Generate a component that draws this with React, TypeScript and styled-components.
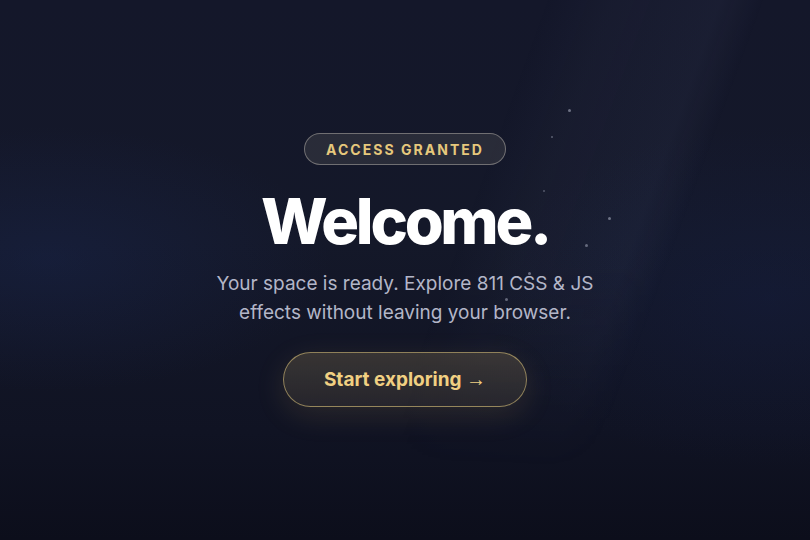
import styled, { createGlobalStyle } from 'styled-components';

const GlobalStyle = createGlobalStyle`
  html, body {
    margin: 0;
    padding: 0;
    background: #121527;
  }
  * {
    box-sizing: border-box;
  }
`;

const particles = [
  { x: 568, y: 109, s: 3, o: 0.5 },
  { x: 551, y: 136, s: 2, o: 0.4 },
  { x: 543, y: 190, s: 2, o: 0.35 },
  { x: 608, y: 217, s: 3, o: 0.5 },
  { x: 585, y: 244, s: 3, o: 0.45 },
  { x: 528, y: 272, s: 3, o: 0.5 },
  { x: 505, y: 298, s: 3, o: 0.45 },
];

function App() {
  return (
    <>
      <GlobalStyle />
      <Screen>
        <Beam />
        {particles.map((p, i) => (
          <Particle
            key={i}
            style={{ left: p.x, top: p.y, width: p.s, height: p.s, opacity: p.o }}
          />
        ))}
        <Content>
          <Badge>ACCESS GRANTED</Badge>
          <Title>Welcome.</Title>
          <Subtitle>
            Your space is ready. Explore 811 CSS &amp; JS
            <br />
            effects without leaving your browser.
          </Subtitle>
          <StartButton>
            Start exploring <Arrow>→</Arrow>
          </StartButton>
        </Content>
      </Screen>
    </>
  );
}

const Screen = styled.main`
  position: relative;
  width: 100vw;
  height: 100vh;
  overflow: hidden;
  display: flex;
  align-items: center;
  justify-content: center;
  font-family: Inter, 'Noto Sans', sans-serif;
  background:
    radial-gradient(ellipse 50% 35% at 6% 48%, rgba(28, 44, 95, 0.3), transparent 70%),
    radial-gradient(ellipse 50% 45% at 95% 55%, rgba(22, 34, 78, 0.3), transparent 70%),
    linear-gradient(180deg, #14172a 0%, #141829 45%, #101323 80%, #0c0e1b 100%);
`;

const Beam = styled.div`
  position: absolute;
  top: -40px;
  left: 450px;
  width: 220px;
  height: 600px;
  transform: skewX(-20deg);
  background: linear-gradient(
    90deg,
    transparent 0%,
    rgba(120, 130, 170, 0.04) 30%,
    rgba(120, 130, 170, 0.065) 80%,
    transparent 100%
  );
  pointer-events: none;
  -webkit-mask-image: linear-gradient(180deg, #000 0%, #000 50%, transparent 85%);
  mask-image: linear-gradient(180deg, #000 0%, #000 50%, transparent 85%);
`;

const Particle = styled.span`
  position: absolute;
  border-radius: 50%;
  background: #c3c8da;
`;

const Content = styled.section`
  position: relative;
  display: flex;
  flex-direction: column;
  align-items: center;
  text-align: center;
`;

const Badge = styled.div`
  height: 32px;
  padding: 0 21px;
  display: flex;
  align-items: center;
  border-radius: 16px;
  border: 1px solid rgba(200, 196, 184, 0.45);
  background: rgba(235, 225, 200, 0.1);
  color: #e6c87c;
  font-size: 14px;
  font-weight: 700;
  letter-spacing: 0.145em;
`;

const Title = styled.h1`
  margin: 20px 0 0;
  color: #ffffff;
  font-size: 63px;
  font-weight: 800;
  line-height: 72px;
  letter-spacing: -0.052em;
`;

const Subtitle = styled.p`
  margin: 12px 0 0;
  color: #b3b6c8;
  font-size: 19px;
  font-weight: 400;
  line-height: 29px;
`;

const StartButton = styled.button`
  margin-top: 25px;
  width: 244px;
  height: 55px;
  border-radius: 28px;
  border: 1.5px solid rgba(214, 190, 120, 0.6);
  background: linear-gradient(180deg, rgba(210, 180, 110, 0.2), rgba(150, 130, 90, 0.16));
  color: #f1d082;
  font-family: inherit;
  font-size: 19px;
  font-weight: 700;
  box-shadow: 0 8px 30px rgba(210, 170, 90, 0.14);
  cursor: pointer;
`;

const Arrow = styled.span`
  font-family: 'Liberation Sans', 'DejaVu Sans', sans-serif;
  font-size: 20px;
  font-weight: 700;
`;

export default App;
